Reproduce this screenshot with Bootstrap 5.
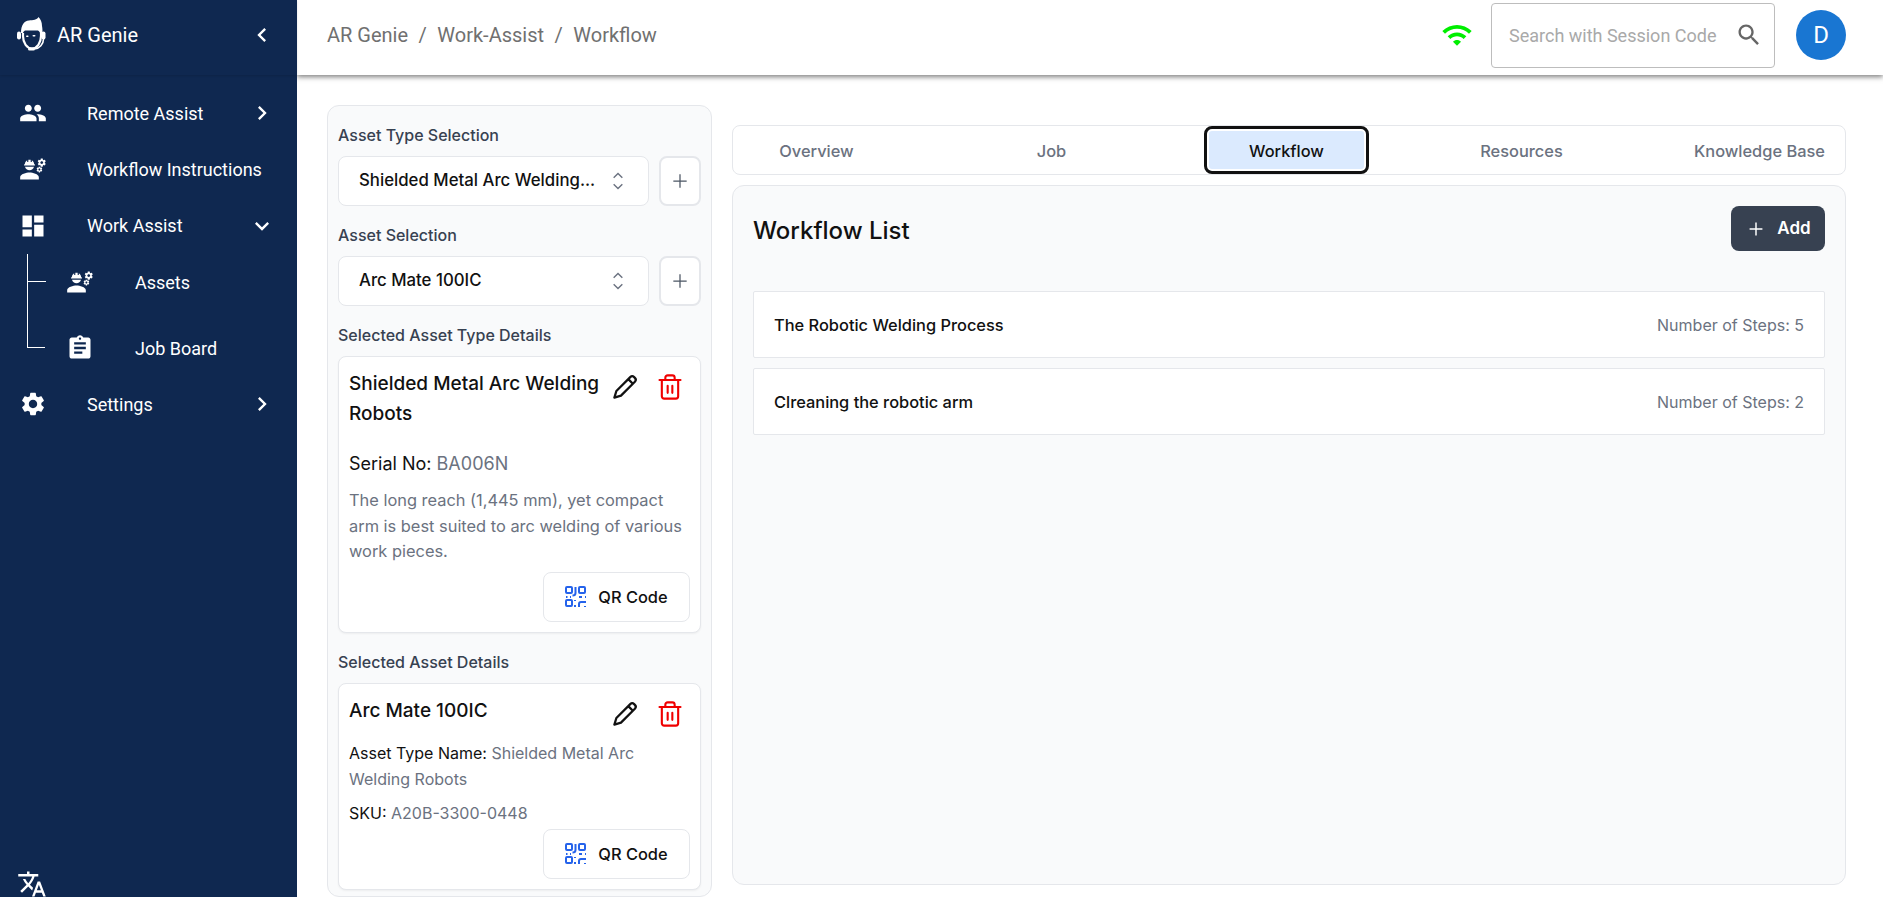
<!DOCTYPE html>
<html lang="en">
<head>
<meta charset="UTF-8" />
<meta name="viewport" content="width=device-width, initial-scale=1.0"/>
<title>AR Genie - Workflow</title>
<link href="https://cdn.jsdelivr.net/npm/bootstrap@5.3.0/dist/css/bootstrap.min.css" rel="stylesheet"/>
<style>
html, body { height: 100%; }
body { font-family: 'Inter', sans-serif; background: #fff; color: #111; overflow: hidden; }
.app-shell { height: 897px; }
.svg-defs { display: none; }
.side-bar { width: 297px; flex: none; background: #0f2850; color: #fff; font-family: 'Roboto', sans-serif; position: relative; z-index: 3; }
.brand-row { height: 75px; padding: 0 21px 5px 16px; font-size: 20px; font-weight: 400; box-shadow: 0 1px 2px rgba(0,0,0,.12); }
.brand-row .brand-name { margin-left: 11px; }
.side-menu { padding-top: 10px; }
.menu-row { height: 56px; padding: 0 21px 0 19px; font-size: 18px; font-weight: 400; }
.menu-row.open-row { height: 57px; }
.menu-row .menu-ico { width: 28px; height: 28px; fill: #fff; flex: none; }
.menu-row .menu-txt { margin-left: 40px; }
.menu-row .menu-chev { width: 28px; height: 28px; fill: #fff; margin-left: auto; flex: none; }
.sub-menu { position: relative; padding-left: 66px; }
.sub-menu .menu-row { padding-left: 0; }
.sub-menu .menu-row .menu-txt { margin-left: 41px; }
.sub-menu .menu-row + .menu-row { margin-top: 10px; }
.tree-line { position: absolute; left: 27px; top: 0; width: 18px; height: 94px; border-left: 1px solid #fff; border-bottom: 1px solid #fff; }
.tree-line::before { content: ""; position: absolute; left: 0; top: 27px; width: 18px; border-top: 1px solid #fff; }
.lang-ico { position: absolute; left: 17px; bottom: -2px; width: 30px; height: 30px; fill: #fff; }

.top-bar { height: 75px; flex: none; background: #fff; box-shadow: 0 2px 5px rgba(0,0,0,.5); padding: 0 37px 5px 30px; position: relative; z-index: 2; font-family: 'Roboto', sans-serif; }
.crumbs { font-size: 20px; color: #707070; }
.crumbs .sep { margin: 0 10.5px; }
.wifi-ico { width: 32px; height: 32px; fill: #00ee00; margin-right: 18px; }
.search-box { width: 284px; height: 65px; border: 1px solid #bdbdbd; border-radius: 4px; padding: 0 11px 0 17px; font-size: 18px; color: #a9a9a9; white-space: nowrap; }
.search-box svg { width: 28px; height: 28px; fill: #666; margin-left: auto; flex: none; }
.avatar-dot { width: 50px; height: 50px; border-radius: 50%; background: #1976d2; color: #fff; font-size: 24px; margin-left: 21px; }

.work-area { padding: 30px 37px 0 30px; gap: 20px; min-height: 0; background: #fff; }
.asset-col { width: 385px; flex: none; height: 792px; background: #f9fafb; border: 1px solid #e5e7eb; border-radius: 12px; padding: 0 10px; }
.field-label { font-size: 16px; font-weight: 500; color: #374151; height: 50px; padding-top: 8px; margin: 0; display: flex; align-items: center; }
.pick-row { gap: 10px; }
.pick-box { flex: 1; height: 50px; background: #fff; border: 1px solid #e5e7eb; border-radius: 8px; padding: 0 17px 0 20px; font-size: 16.8px; font-weight: 500; color: #111; white-space: nowrap; }
.pick-box svg { width: 26px; height: 26px; margin-left: auto; stroke: #6b7280; fill: none; stroke-width: 1.3; flex: none; }
.plus-btn { width: 42px; height: 50px; background: #fff; border: 2px solid #e5e7eb; border-radius: 8px; padding: 0; flex: none; }
.plus-btn svg { width: 20px; height: 20px; stroke: #4b5563; fill: none; stroke-width: 1.5; }
.info-card { background: #fff; border: 1px solid #e5e7eb; border-radius: 8px; padding: 12px 10px 10px; box-shadow: 0 1px 2px rgba(0,0,0,.05); }
.info-title { font-size: 19px; font-weight: 500; line-height: 30px; margin: 0; color: #111; }
.info-acts { gap: 16px; flex: none; padding: 3px 6px 0 4px; align-items: flex-start; }
.info-acts svg { fill: none; stroke-width: 1.8; stroke-linecap: round; stroke-linejoin: round; }
.ico-pen { width: 30px; height: 30px; stroke: #111; }
.ico-bin { width: 28px; height: 28px; stroke: #f00000; margin-top: 1px; }
.serial-line { font-size: 18px; line-height: 27px; color: #111; margin: 21px 0 0; }
.grey-txt { color: #6b7280; }
.desc-txt { font-size: 16.4px; line-height: 25.5px; color: #6b7280; margin: 11px 0 0; }
.meta-txt { font-size: 16px; line-height: 26px; margin: 0; color: #111; }
.qr-btn { width: 147px; height: 50px; background: #fff; border: 1px solid #e5e7eb; border-radius: 8px; font-size: 16.4px; font-weight: 500; color: #111; padding: 1px 0 0; gap: 11px; }
.qr-btn svg { width: 22px; height: 22px; fill: none; stroke: #2563eb; stroke-width: 2; }
.qr-first { margin-top: 7px; }
.meta-first { margin-top: 11px; }
.meta-sku { margin-top: 8px; }
.qr-slot { margin-top: 3px; }

.right-col { flex: 1; min-width: 0; height: 760px; margin-top: 20px; }
.tab-strip { height: 50px; background: #fff; border: 1px solid #e5e7eb; border-radius: 8px; gap: 70px; flex: none; padding-left: 1px; }
.tab-item { min-width: 165px; padding: 3px 20px 0; font-size: 16.4px; font-weight: 500; color: #6b7280; background: none; border: 0; border-radius: 8px; white-space: nowrap; text-align: center; }
.tab-item.is-current { background: #dbeafe; color: #111; border: 3px solid #111; box-shadow: inset 0 0 0 2px #fff; }
.flow-panel { margin-top: 10px; flex: 1; background: #f9fafb; border: 1px solid #e5e7eb; border-radius: 12px; padding: 19px 20px 20px; }
.flow-head { height: 46px; margin-bottom: 40px; }
.flow-title { font-size: 24px; font-weight: 500; margin: 6px 0 0; color: #111; }
.add-btn { width: 94px; height: 45px; background: #374151; color: #fff; border: 0; border-radius: 8px; font-size: 17px; font-weight: 600; gap: 10px; padding: 2px 0 0; }
.add-btn svg { width: 22px; height: 22px; stroke: #fff; fill: none; stroke-width: 1.6; }
.flow-row { height: 67px; background: #fff; border: 1px solid #e5e7eb; border-radius: 2px; padding: 1px 20px 0; margin-bottom: 10px; font-size: 16.4px; font-weight: 500; color: #111; }
.flow-row .step-num { font-size: 16px; font-weight: 400; color: #6b7280; }
</style>
</head>
<body>
<svg class="svg-defs">
  <symbol id="i-engineer" viewBox="0 0 24 24"><path d="M9,15c-2.67,0-8,1.34-8,4v2h16v-2C17,16.34,11.67,15,9,15z M22.1,6.84c0.01-0.11,0.02-0.22,0.02-0.34c0-0.12-0.01-0.23-0.03-0.34l0.74-0.58c0.07-0.05,0.08-0.15,0.04-0.22l-0.7-1.21c-0.04-0.08-0.14-0.1-0.21-0.08L21.1,4.42c-0.18-0.14-0.38-0.25-0.59-0.34l-0.13-0.93C20.36,3.06,20.29,3,20.2,3h-1.4c-0.09,0-0.16,0.06-0.17,0.15L18.5,4.08c-0.21,0.09-0.41,0.21-0.59,0.34l-0.87-0.35c-0.08-0.03-0.17,0-0.21,0.08l-0.7,1.21c-0.04,0.08-0.03,0.17,0.04,0.22l0.74,0.58c-0.02,0.11-0.03,0.23-0.03,0.34c0,0.11,0.01,0.23,0.03,0.34l-0.74,0.58c-0.07,0.05-0.08,0.15-0.04,0.22l0.7,1.21c0.04,0.08,0.14,0.1,0.21,0.08l0.87-0.35c0.18,0.14,0.38,0.25,0.59,0.34l0.13,0.93C18.64,9.94,18.71,10,18.8,10h1.4c0.09,0,0.16-0.06,0.17-0.15l0.13-0.93c0.21-0.09,0.41-0.21,0.59-0.34l0.87,0.35c0.08,0.03,0.17,0,0.21-0.08l0.7-1.21c0.04-0.08,0.03-0.17-0.04-0.22L22.1,6.84z M19.5,7.75c-0.69,0-1.25-0.56-1.25-1.25s0.56-1.25,1.25-1.25s1.25,0.56,1.25,1.25S20.19,7.75,19.5,7.75z M19.92,11.68l-0.5-0.87c-0.03-0.06-0.1-0.08-0.15-0.06l-0.62,0.25c-0.13-0.1-0.27-0.18-0.42-0.24l-0.09-0.66C18.12,10.04,18.06,10,18,10h-1c-0.06,0-0.11,0.04-0.12,0.11l-0.09,0.66c-0.15,0.06-0.29,0.15-0.42,0.24l-0.62-0.25c-0.06-0.02-0.12,0-0.15,0.06l-0.5,0.87c-0.03,0.06-0.02,0.12,0.03,0.16l0.53,0.41c-0.01,0.08-0.02,0.16-0.02,0.24c0,0.08,0.01,0.17,0.02,0.24l-0.53,0.41c-0.05,0.04-0.06,0.11-0.03,0.16l0.5,0.87c0.03,0.06,0.1,0.08,0.15,0.06l0.62-0.25c0.13,0.1,0.27,0.18,0.42,0.24l0.09,0.66c0.01,0.07,0.06,0.11,0.12,0.11h1c0.06,0,0.12-0.04,0.12-0.11l0.09-0.66c0.15-0.06,0.29-0.15,0.42-0.24l0.62,0.25c0.06,0.02,0.12,0,0.15-0.06l0.5-0.87c0.03-0.06,0.02-0.12-0.03-0.16l-0.52-0.41c0.01-0.08,0.02-0.16,0.02-0.24c0-0.08-0.01-0.17-0.02-0.24l0.53-0.41C19.93,11.81,19.94,11.74,19.92,11.68z M17.5,13.33c-0.46,0-0.83-0.38-0.83-0.83c0-0.46,0.38-0.83,0.83-0.83s0.83,0.38,0.83,0.83C18.33,12.96,17.96,13.33,17.5,13.33z M4.74,9h8.53c0.27,0,0.49-0.22,0.49-0.49V8.49c0-0.27-0.22-0.49-0.49-0.49H13c0-1.48-0.81-2.75-2-3.45V5.5C11,5.78,10.78,6,10.5,6S10,5.78,10,5.5V4.14C9.68,4.06,9.35,4,9,4S8.32,4.06,8,4.14V5.5C8,5.78,7.78,6,7.5,6S7,5.78,7,5.5V4.55C5.81,5.25,5,6.52,5,8H4.74C4.47,8,4.25,8.22,4.25,8.49v0.03C4.25,8.78,4.47,9,4.74,9z M9,13c1.86,0,3.41-1.28,3.86-3H5.14C5.59,11.72,7.14,13,9,13z"/></symbol>
  <symbol id="i-right" viewBox="0 0 24 24"><path d="M10 6L8.59 7.41 13.17 12l-4.58 4.59L10 18l6-6z"/></symbol>
  <symbol id="i-updown" viewBox="0 0 24 24"><path d="M8 9l4-4 4 4M8 15l4 4 4-4"/></symbol>
  <symbol id="i-plus" viewBox="0 0 24 24"><path d="M12 4v16M4 12h16"/></symbol>
  <symbol id="i-pen" viewBox="0 0 24 24"><path d="M3.500 20.500l1.600-5.300L16.200 4.100a2.200 2.200 0 0 1 3.100 0l.6.6a2.200 2.200 0 0 1 0 3.100L8.800 18.900zM14.600 5.700l3.700 3.700"/></symbol>
  <symbol id="i-bin" viewBox="0 0 24 24"><path d="M3 6h18M8 6V4a2 2 0 0 1 2-2h4a2 2 0 0 1 2 2v2M19 6v14a2 2 0 0 1-2 2H7a2 2 0 0 1-2-2V6M10 11v6M14 11v6"/></symbol>
  <symbol id="i-qr" viewBox="0 0 22 22"><rect x="1" y="1" width="6" height="6" rx="1"/><rect x="14" y="1" width="6" height="6" rx="1"/><rect x="1" y="14" width="6" height="6" rx="1"/><path d="M10.500 1v6c0 2-1 2.500-3 2.500M1 11h1.500M5 11h1M10 14v1M10 19v2M14 11h3M20 11h1M14 21v-3a2 2 0 0 1 2-2h5M20 20v1"/></symbol>
</svg>

<div class="app-shell d-flex">
  <aside class="side-bar">
    <div class="brand-row d-flex align-items-center">
      <svg width="30" height="36" viewBox="0 0 30 36" fill="none">
        <path d="M5 16C5 8 8 4 13 3.500c4-.3 8-.8 9.500-3.500 2 2 3.500 5 3.500 9 .5 2 .5 5 .5 7H24c-.5-1.500-1-2-2-2.500H9c-1 .5-1.500 1-2 2.500z" fill="#fff"/>
        <path d="M7 16v3c0 7 4 12.500 9 12.500s9-5.500 9-12.500v-3" stroke="#fff" stroke-width="2.200"/>
        <rect x="1" y="14.500" width="4" height="8" rx="2" fill="#fff"/>
        <rect x="25.500" y="14.500" width="4" height="8" rx="2" fill="#fff"/>
        <rect x="10" y="18.500" width="2.600" height="1.600" rx=".8" fill="#fff"/>
        <rect x="16.500" y="18" width="3" height="1.600" rx=".8" fill="#fff"/>
        <path d="M27.500 22c0 5-4 9.500-9 10" stroke="#fff" stroke-width="1.600"/>
        <rect x="12" y="30.500" width="7" height="3" rx="1.500" fill="#fff"/>
      </svg>
      <span class="brand-name">AR Genie</span>
      <svg class="ms-auto" width="28" height="28" viewBox="0 0 24 24" fill="#fff"><path d="M15.41 7.41L14 6l-6 6 6 6 1.41-1.41L10.83 12z"/></svg>
    </div>
    <nav class="side-menu">
      <div class="menu-row d-flex align-items-center">
        <svg class="menu-ico" viewBox="0 0 24 24"><path d="M16 11c1.66 0 2.99-1.34 2.99-3S17.66 5 16 5c-1.66 0-3 1.34-3 3s1.34 3 3 3zm-8 0c1.66 0 2.99-1.34 2.99-3S9.66 5 8 5C6.34 5 5 6.34 5 8s1.34 3 3 3zm0 2c-2.33 0-7 1.17-7 3.5V19h14v-2.5c0-2.33-4.67-3.5-7-3.5zm8 0c-.29 0-.62.02-.97.05 1.16.84 1.97 1.97 1.97 3.45V19h6v-2.5c0-2.33-4.67-3.5-7-3.5z"/></svg>
        <span class="menu-txt">Remote Assist</span>
        <svg class="menu-chev"><use href="#i-right"/></svg>
      </div>
      <div class="menu-row d-flex align-items-center">
        <svg class="menu-ico"><use href="#i-engineer"/></svg>
        <span class="menu-txt">Workflow Instructions</span>
      </div>
      <div class="menu-row open-row d-flex align-items-center">
        <svg class="menu-ico" viewBox="0 0 24 24"><path d="M3 13h8V3H3v10zm0 8h8v-6H3v6zm10 0h8V11h-8v10zm0-18v6h8V3h-8z"/></svg>
        <span class="menu-txt">Work Assist</span>
        <svg class="menu-chev" viewBox="0 0 24 24"><path d="M16.59 8.59L12 13.17 7.41 8.59 6 10l6 6 6-6z"/></svg>
      </div>
      <div class="sub-menu">
        <span class="tree-line"></span>
        <div class="menu-row d-flex align-items-center">
          <svg class="menu-ico"><use href="#i-engineer"/></svg>
          <span class="menu-txt">Assets</span>
        </div>
        <div class="menu-row d-flex align-items-center">
          <svg class="menu-ico" viewBox="0 0 24 24"><path d="M19 3h-4.18C14.4 1.84 13.3 1 12 1c-1.3 0-2.4.84-2.82 2H5c-1.1 0-2 .9-2 2v14c0 1.1.9 2 2 2h14c1.1 0 2-.9 2-2V5c0-1.1-.9-2-2-2zm-7 0c.55 0 1 .45 1 1s-.45 1-1 1-1-.45-1-1 .45-1 1-1zm2 14H7v-2h7v2zm3-4H7v-2h10v2zm0-4H7V7h10v2z"/></svg>
          <span class="menu-txt">Job Board</span>
        </div>
      </div>
      <div class="menu-row d-flex align-items-center">
        <svg class="menu-ico" viewBox="0 0 24 24"><path d="M19.14 12.94c.04-.3.06-.61.06-.94 0-.32-.02-.64-.07-.94l2.03-1.58c.18-.14.23-.41.12-.61l-1.92-3.32c-.12-.22-.37-.29-.59-.22l-2.39.96c-.5-.38-1.03-.7-1.62-.94l-.36-2.54c-.04-.24-.24-.41-.48-.41h-3.84c-.24 0-.43.17-.47.41l-.36 2.54c-.59.24-1.13.57-1.62.94l-2.39-.96c-.22-.08-.47 0-.59.22L2.74 8.87c-.12.21-.08.47.12.61l2.03 1.58c-.05.3-.09.63-.09.94s.02.64.07.94l-2.03 1.58c-.18.14-.23.41-.12.61l1.92 3.32c.12.22.37.29.59.22l2.39-.96c.5.38 1.03.7 1.62.94l.36 2.54c.05.24.24.41.48.41h3.84c.24 0 .44-.17.47-.41l.36-2.54c.59-.24 1.13-.56 1.62-.94l2.39.96c.22.08.47 0 .59-.22l1.92-3.32c.12-.22.07-.47-.12-.61l-2.01-1.58zM12 15.6c-1.98 0-3.6-1.62-3.6-3.6s1.62-3.6 3.6-3.6 3.6 1.62 3.6 3.6-1.62 3.6-3.6 3.6z"/></svg>
        <span class="menu-txt">Settings</span>
        <svg class="menu-chev"><use href="#i-right"/></svg>
      </div>
    </nav>
    <svg class="lang-ico" viewBox="0 0 24 24"><path d="M12.87 15.07l-2.54-2.51.03-.03c1.74-1.94 2.98-4.17 3.71-6.53H17V4h-7V2H8v2H1v1.99h11.17C11.5 7.92 10.44 9.75 9 11.35 8.07 10.32 7.3 9.19 6.69 8h-2c.73 1.63 1.73 3.17 2.98 4.56l-5.09 5.02L4 19l5-5 3.11 3.11.76-2.04zM18.5 10h-2L12 22h2l1.12-3h4.75L21 22h2l-4.5-12zm-2.62 7l1.62-4.33L19.12 17h-3.24z"/></svg>
  </aside>

  <div class="flex-grow-1 d-flex flex-column" style="min-width:0">
    <header class="top-bar d-flex align-items-center">
      <div class="crumbs"><span>AR Genie</span><span class="sep">/</span><span>Work-Assist</span><span class="sep">/</span><span>Workflow</span></div>
      <svg class="wifi-ico ms-auto" viewBox="0 0 24 24"><path d="M1 9l2 2c4.97-4.97 13.03-4.97 18 0l2-2C16.93 2.93 7.08 2.93 1 9zm8 8l3 3 3-3c-1.65-1.66-4.34-1.66-6 0zm-4-4l2 2c2.76-2.76 7.24-2.76 10 0l2-2C15.14 9.14 8.87 9.14 5 13z"/></svg>
      <div class="search-box d-flex align-items-center">
        <span>Search with Session Code</span>
        <svg viewBox="0 0 24 24"><path d="M15.5 14h-.79l-.28-.27C15.41 12.59 16 11.11 16 9.5 16 5.91 13.09 3 9.5 3S3 5.91 3 9.5 5.91 16 9.5 16c1.61 0 3.09-.59 4.23-1.57l.27.28v.79l5 4.99L20.49 19l-4.99-5zm-6 0C7.01 14 5 11.99 5 9.5S7.01 5 9.5 5 14 7.01 14 9.5 11.99 14 9.5 14z"/></svg>
      </div>
      <div class="avatar-dot d-flex align-items-center justify-content-center">D</div>
    </header>

    <main class="work-area d-flex flex-grow-1">
      <section class="asset-col">
        <p class="field-label">Asset Type Selection</p>
        <div class="pick-row d-flex">
          <div class="pick-box d-flex align-items-center">
            <span>Shielded Metal Arc Welding...</span>
            <svg><use href="#i-updown"/></svg>
          </div>
          <button class="plus-btn d-flex align-items-center justify-content-center"><svg><use href="#i-plus"/></svg></button>
        </div>
        <p class="field-label">Asset Selection</p>
        <div class="pick-row d-flex">
          <div class="pick-box d-flex align-items-center">
            <span>Arc Mate 100IC</span>
            <svg><use href="#i-updown"/></svg>
          </div>
          <button class="plus-btn d-flex align-items-center justify-content-center"><svg><use href="#i-plus"/></svg></button>
        </div>
        <p class="field-label">Selected Asset Type Details</p>
        <div class="info-card">
          <div class="d-flex justify-content-between">
            <h5 class="info-title">Shielded Metal Arc Welding Robots</h5>
            <div class="info-acts d-flex">
              <svg class="ico-pen"><use href="#i-pen"/></svg>
              <svg class="ico-bin"><use href="#i-bin"/></svg>
            </div>
          </div>
          <p class="serial-line">Serial No: <span class="grey-txt">BA006N</span></p>
          <p class="desc-txt">The long reach (1,445 mm), yet compact arm is best suited to arc welding of various work pieces.</p>
          <div class="d-flex justify-content-end qr-first">
            <button class="qr-btn d-flex align-items-center justify-content-center"><svg><use href="#i-qr"/></svg>QR Code</button>
          </div>
        </div>
        <p class="field-label">Selected Asset Details</p>
        <div class="info-card">
          <div class="d-flex justify-content-between">
            <h5 class="info-title">Arc Mate 100IC</h5>
            <div class="info-acts d-flex">
              <svg class="ico-pen"><use href="#i-pen"/></svg>
              <svg class="ico-bin"><use href="#i-bin"/></svg>
            </div>
          </div>
          <p class="meta-txt meta-first">Asset Type Name: <span class="grey-txt">Shielded Metal Arc Welding Robots</span></p>
          <p class="meta-txt meta-sku">SKU: <span class="grey-txt">A20B-3300-0448</span></p>
          <div class="d-flex justify-content-end qr-slot">
            <button class="qr-btn d-flex align-items-center justify-content-center"><svg><use href="#i-qr"/></svg>QR Code</button>
          </div>
        </div>
      </section>

      <section class="right-col d-flex flex-column">
        <div class="tab-strip d-flex">
          <button class="tab-item">Overview</button>
          <button class="tab-item">Job</button>
          <button class="tab-item is-current">Workflow</button>
          <button class="tab-item">Resources</button>
          <button class="tab-item">Knowledge Base</button>
        </div>
        <div class="flow-panel">
          <div class="flow-head d-flex align-items-center justify-content-between">
            <h3 class="flow-title">Workflow List</h3>
            <button class="add-btn d-flex align-items-center justify-content-center"><svg viewBox="0 0 24 24"><path d="M12 5v14M5 12h14"/></svg>Add</button>
          </div>
          <div class="flow-row d-flex align-items-center justify-content-between"><span>The Robotic Welding Process</span><span class="step-num">Number of Steps: 5</span></div>
          <div class="flow-row d-flex align-items-center justify-content-between"><span>Clreaning the robotic arm</span><span class="step-num">Number of Steps: 2</span></div>
        </div>
      </section>
    </main>
  </div>
</div>
<script src="https://cdn.jsdelivr.net/npm/bootstrap@5.3.0/dist/js/bootstrap.bundle.min.js"></script>
</body>
</html>
